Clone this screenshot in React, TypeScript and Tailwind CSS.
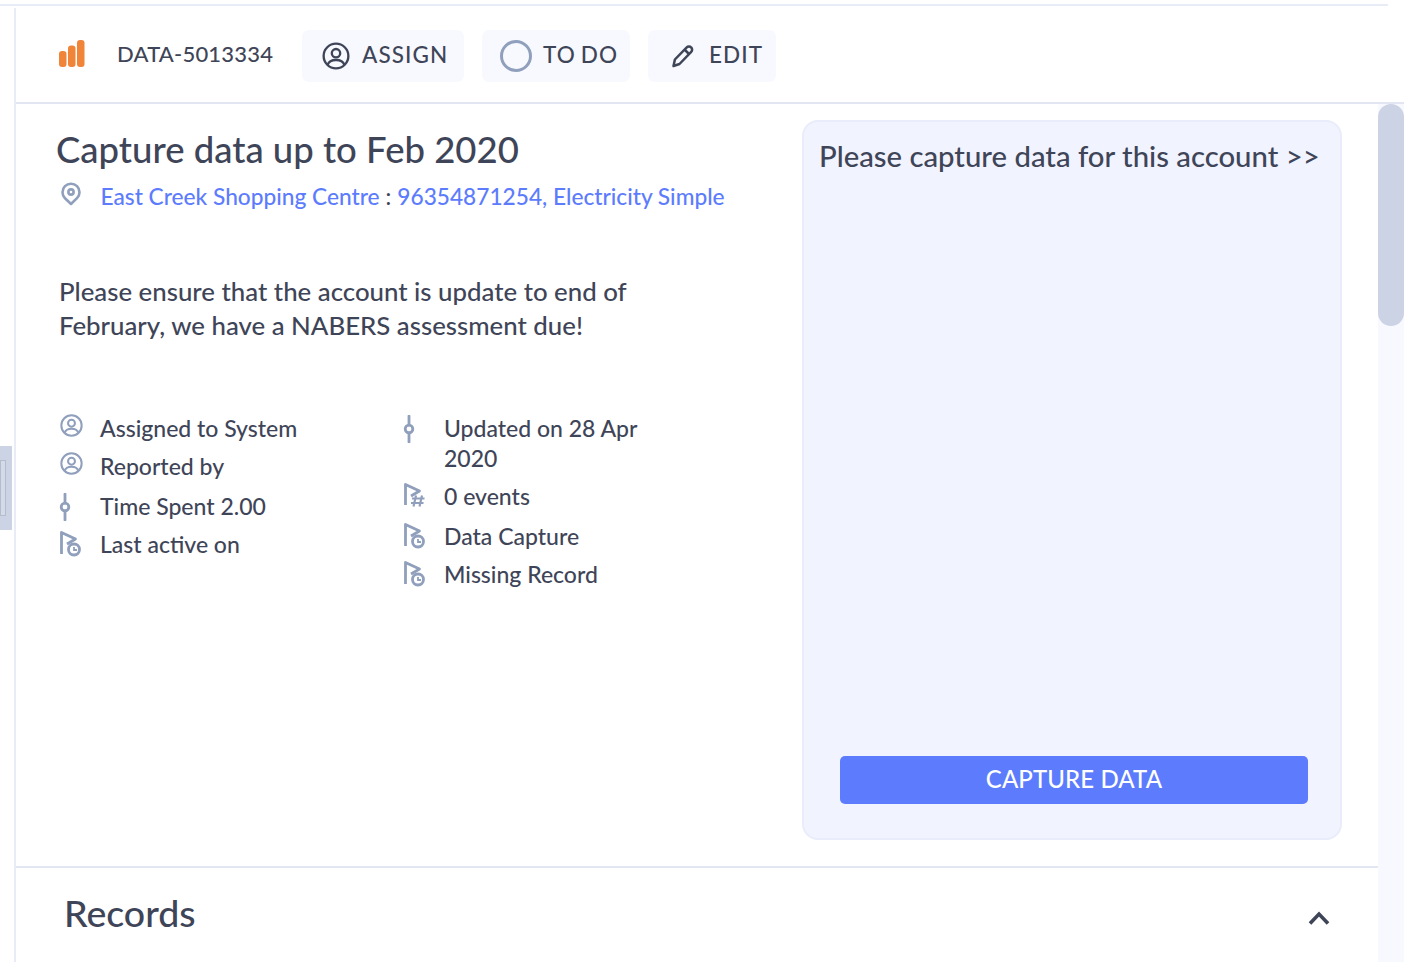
import React from "react";

const Bars = () => (
  <svg width="26" height="28" viewBox="0 0 26 28" className="-mt-[3px] shrink-0" fill="#f0853a">
    <rect x="0" y="11" width="7.5" height="16" rx="3" />
    <rect x="9" y="5.5" width="7.5" height="21.5" rx="3" />
    <rect x="18" y="0" width="7.5" height="27" rx="3" />
  </svg>
);

const UserCircle = ({ size, color, sw, cls }: { size: number; color: string; sw: number; cls?: string }) => (
  <svg width={size} height={size} viewBox="0 0 24 24" fill="none" stroke={color} strokeWidth={sw} className={`shrink-0 ${cls ?? ""}`}>
    <circle cx="12" cy="12" r="10.6" />
    <circle cx="12" cy="9.6" r="3.6" />
    <path d="M4.8 19.6c1-3 3.6-4.2 7.2-4.2s6.2 1.200 7.200 4.200" />
  </svg>
);

const Pin = () => (
  <svg width="20" height="24" viewBox="0 0 20 24" fill="none" stroke="#8f9fbc" strokeWidth="2.600" className="shrink-0">
    <path d="M10 22 L4 16.200 A8.500 8.500 0 1 1 16 16.200 Z" strokeLinejoin="round" />
    <circle cx="10" cy="10" r="2.600" />
  </svg>
);

const Commit = () => (
  <svg width="12" height="28" viewBox="0 0 12 28" fill="none" stroke="#8f9fbc" strokeWidth="2.800" className="mt-[1px] shrink-0">
    <circle cx="6" cy="14" r="3.800" />
    <path d="M6 1v9M6 18v9" strokeLinecap="round" />
  </svg>
);

const FlagClock = () => (
  <svg width="24" height="28" viewBox="0 0 24 28" fill="none" stroke="#8f9fbc" strokeWidth="2.800" className="shrink-0">
    <path d="M2.500 24V2.500l14 6.500-8.500 5" strokeLinejoin="round" />
    <circle cx="15" cy="19.500" r="5.500" />
    <path d="M15 17V20H18" strokeWidth="1.800" />
  </svg>
);

const FlagHash = () => (
  <svg width="24" height="28" viewBox="0 0 24 28" fill="none" stroke="#8f9fbc" strokeWidth="2.800" className="shrink-0">
    <path d="M2.500 23V2.500l14 6.500-8.500 5" strokeLinejoin="round" />
    <path d="M13 13.500l-2.500 11M19 13.500l-2.500 11M9 16.500h12.500M8 21h12.500" strokeWidth="2.200" />
  </svg>
);

const Pencil = () => (
  <svg width="24" height="24" viewBox="0 0 24 24" fill="none" stroke="#3f4558" strokeWidth="2.500" strokeLinejoin="round" className="-mt-[1px] ml-[1px] shrink-0">
    <path d="M2.500 22l1.400-6.500L15.500 3.600c1.500-1.500 3.600-1.300 4.700-.1 1.200 1.200 1.300 3.200-.2 4.700L8.500 20z" />
    <path d="M13.500 5.500l5 5" />
  </svg>
);

const Item = ({ icon, children, cls }: { icon: React.ReactNode; children: React.ReactNode; cls: string }) => (
  <div className={`flex items-start ${cls}`}>
    <div className="mt-[1px] flex w-[41px] shrink-0 justify-start">{icon}</div>
    <div className="text-[23px] font-medium leading-[30px]">{children}</div>
  </div>
);

const Btn = ({ w, children, cls }: { w: string; children: React.ReactNode; cls: string }) => (
  <div className={`mt-[2px] flex h-[52px] items-center rounded-[7px] bg-[#f8f9fe] text-[22.5px] font-medium tracking-[1.100px] ${w} ${cls}`}>
    {children}
  </div>
);

export default function App() {
  return (
    <div className="h-[980px] w-[1414px] overflow-hidden bg-white text-[#3f4558] [font-family:Lato,sans-serif]">
      <div className="ml-0 mt-[4px] h-[2px] w-[1388px] bg-[#e8ecf6]" />
      <div className="flex h-[956px] items-stretch">
        <div className="w-[14px] shrink-0 pt-[440px]">
          <div className="flex h-[84px] w-[12px] items-center bg-[#ccd3e4]">
            <div className="h-[56px] w-[6px] border border-[#b4bccd] bg-[#d5dae8]" />
          </div>
        </div>
        <div className="mt-[2px] flex w-[1390px] flex-col border-l-2 border-[#e8ecf6]">
          <div className="flex h-[96px] shrink-0 items-center border-b-2 border-[#e2e6f3] pl-[43px]">
            <Bars />
            <div className="ml-[32px] w-[185px] pb-[3px] text-[22px] font-medium tracking-[0.2px]">DATA-5013334</div>
            <Btn w="w-[162px]" cls="pl-[20px] gap-[12px]">
              <UserCircle size={28} color="#3f4558" sw={2} />
              <span className="pb-[2px]">ASSIGN</span>
            </Btn>
            <Btn w="w-[148px] ml-[18px]" cls="pl-[18px] gap-[11px]">
              <div className="h-[32px] w-[32px] shrink-0 rounded-full border-[3.500px] border-[#8f9fbc]" />
              <span className="pb-[2px] [word-spacing:-2px]">TO DO</span>
            </Btn>
            <Btn w="w-[128px] ml-[18px]" cls="pl-[22px] gap-[14px]">
              <Pencil />
              <span className="pb-[2px]">EDIT</span>
            </Btn>
          </div>
          <div className="flex min-h-0 flex-1">
            <div className="flex w-[1362px] shrink-0 flex-col">
              <div className="flex h-[764px] shrink-0 border-b-2 border-[#e2e6f3]">
                <div className="w-[786px] shrink-0 pl-[40px]">
                  <h1 className="mt-[20px] whitespace-nowrap text-[36.5px] font-medium leading-[50px]">Capture data up to Feb 2020</h1>
                  <div className="mt-[8px] flex items-center pl-[5px] text-[22.7px] font-medium leading-[30px]">
                    <div className="mr-[19.500px] -mt-[6px]"><Pin /></div>
                    <span className="text-[#5c7cfd]">East Creek Shopping Centre</span>
                    <span className="mx-[6px]">:</span>
                    <span className="text-[#5c7cfd]">96354871254, Electricity Simple</span>
                  </div>
                  <p className="ml-[3px] mt-[62px] w-[640px] text-[25.8px] font-medium leading-[34px]">
                    Please ensure that the account is update to end of February, we have a NABERS assessment due!
                  </p>
                  <div className="ml-[3px] mt-[71px] flex">
                    <div className="w-[344px] shrink-0">
                      <Item cls="h-[38px]" icon={<UserCircle size={23} color="#8f9fbc" sw={2.100} cls="ml-[1px]" />}>Assigned to System</Item>
                      <Item cls="h-[40px]" icon={<UserCircle size={23} color="#8f9fbc" sw={2.100} cls="ml-[1px]" />}>Reported by</Item>
                      <Item cls="h-[38px]" icon={<Commit />}>Time Spent 2.00</Item>
                      <Item cls="h-[38px]" icon={<FlagClock />}>Last active on</Item>
                    </div>
                    <div className="w-[260px] shrink-0">
                      <Item cls="h-[68px]" icon={<Commit />}>Updated on 28 Apr 2020</Item>
                      <Item cls="h-[40px]" icon={<FlagHash />}>0 events</Item>
                      <Item cls="h-[38px]" icon={<FlagClock />}>Data Capture</Item>
                      <Item cls="h-[38px]" icon={<FlagClock />}>Missing Record</Item>
                    </div>
                  </div>
                </div>
                <div className="mt-[16px] flex h-[720px] w-[540px] shrink-0 flex-col rounded-[16px] border-2 border-[#e9edfb] bg-[#f1f3fe] pb-[34px] pl-[15px]">
                  <div className="mt-[14px] whitespace-nowrap text-[29.3px] font-medium leading-[40px]">Please capture data for this account &gt;&gt;</div>
                  <button className="ml-[21px] mt-auto flex h-[48px] w-[468px] items-center justify-center rounded-[5px] bg-[#5c7cfd] pb-[2px] text-[24px] font-medium tracking-[0.1px] text-white">
                    CAPTURE DATA
                  </button>
                </div>
              </div>
              <div className="flex h-[94px] shrink-0 items-center justify-between pl-[48px] pr-[48px]">
                <div className="-mt-[4px] text-[37.5px] font-medium leading-[50px]">Records</div>
                <svg width="22" height="14" viewBox="0 0 22 14" fill="none" stroke="#3f4558" strokeWidth="3.600" className="mt-[6px]">
                  <path d="M2 12.500L11 3l9 9.500" />
                </svg>
              </div>
            </div>
            <div className="h-[858px] w-[26px] shrink-0 bg-[#f8f9fe]">
              <div className="h-[222px] w-[26px] rounded-l-[13px] rounded-r-[13px] bg-[#ccd3e4]" />
            </div>
          </div>
        </div>
      </div>
    </div>
  );
}
